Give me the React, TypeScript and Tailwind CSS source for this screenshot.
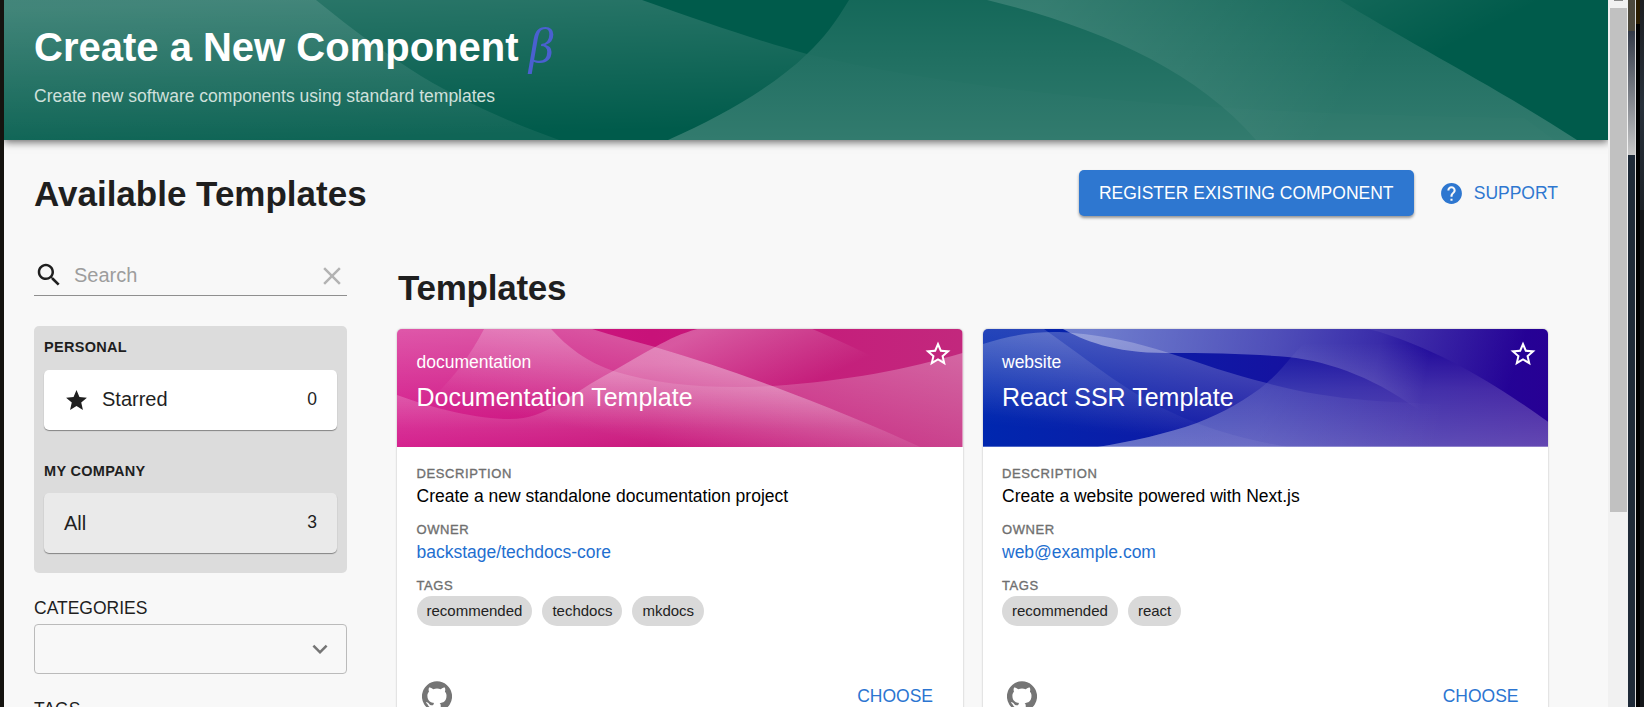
import { ReactNode } from 'react';

function Star({ outline = false, className = '' }: { outline?: boolean; className?: string }) {
  return (
    <svg viewBox="0 0 24 24" fill="currentColor" className={className}>
      {outline ? (
        <path d="M22 9.24l-7.19-.62L12 2 9.19 8.63 2 9.24l5.46 4.73L5.82 21 12 17.27 18.18 21l-1.63-7.03L22 9.24zM12 15.4l-3.76 2.27 1-4.28-3.32-2.88 4.38-.38L12 6.1l1.71 4.04 4.38.38-3.32 2.88 1 4.28L12 15.4z" />
      ) : (
        <path d="M12 17.27L18.18 21l-1.64-7.03L22 9.24l-7.19-.61L12 2 9.19 8.63 2 9.24l5.46 4.73L5.82 21z" />
      )}
    </svg>
  );
}

function GitHub() {
  return (
    <svg viewBox="0 0 24 24" fill="#757575" className="h-[30px] w-[30px] shrink-0">
      <path d="M12 .3a12 12 0 0 0-3.8 23.4c.6.1.8-.3.8-.6v-2c-3.3.7-4-1.6-4-1.6-.6-1.4-1.4-1.8-1.4-1.8-1-.7.1-.7.1-.7 1.2 0 1.9 1.2 1.9 1.2 1 1.8 2.8 1.3 3.5 1 0-.8.4-1.3.7-1.6-2.7-.3-5.5-1.3-5.5-6 0-1.2.5-2.3 1.3-3.1-.2-.4-.6-1.6 0-3.2 0 0 1-.3 3.4 1.2a11.5 11.5 0 0 1 6 0c2.3-1.5 3.3-1.2 3.3-1.2.6 1.6.2 2.8 0 3.2.9.8 1.3 1.9 1.3 3.2 0 4.6-2.8 5.6-5.5 5.9.5.4.9 1 .9 2.2v3.3c0 .3.1.7.8.6A12 12 0 0 0 12 .3" />
    </svg>
  );
}

function HeaderArt() {
  return (
    <svg viewBox="0 0 1604 140" preserveAspectRatio="none" className="absolute inset-0 h-full w-full">
      <defs>
        <linearGradient id="ha" gradientUnits="userSpaceOnUse" x1="300" y1="0" x2="304" y2="140">
          <stop offset="0" stopColor="#fff" stopOpacity=".16" />
          <stop offset="1" stopColor="#fff" stopOpacity="0" />
        </linearGradient>
        <linearGradient id="hl" gradientUnits="userSpaceOnUse" x1="0" y1="0" x2="0" y2="140">
          <stop offset="0" stopColor="#fff" stopOpacity=".12" />
          <stop offset="1" stopColor="#fff" stopOpacity=".06" />
        </linearGradient>
        <linearGradient id="hb" gradientUnits="userSpaceOnUse" x1="0" y1="0" x2="0" y2="140">
          <stop offset="0" stopColor="#fff" stopOpacity=".08" />
          <stop offset="1" stopColor="#fff" stopOpacity=".19" />
        </linearGradient>
        <linearGradient id="hc" gradientUnits="userSpaceOnUse" x1="0" y1="50" x2="14" y2="150">
          <stop offset="0" stopColor="#fff" stopOpacity=".1" />
          <stop offset="1" stopColor="#fff" stopOpacity=".01" />
        </linearGradient>
        <linearGradient id="hd" gradientUnits="userSpaceOnUse" x1="1040" y1="0" x2="1300" y2="160">
          <stop offset="0" stopColor="#fff" stopOpacity=".14" />
          <stop offset="1" stopColor="#fff" stopOpacity=".01" />
        </linearGradient>
        <linearGradient id="he" gradientUnits="userSpaceOnUse" x1="1330" y1="-20" x2="1380" y2="80">
          <stop offset="0" stopColor="#fff" stopOpacity=".09" />
          <stop offset="1" stopColor="#fff" stopOpacity="0" />
        </linearGradient>
      </defs>
      <path d="M0 0H638C700 22 758 42 803 54C770 86 720 115 664 140H0Z" fill="url(#ha)" />
      <path d="M0 0H312C350 31 385 56 417 76C462 103 510 124 555 140H0Z" fill="url(#hl)" />
      <path d="M845 0C831 23 820 38 803 54C770 86 720 115 664 140H1573C1490 86 1400 40 1336 0Z" fill="url(#hb)" />
      <path d="M803 54C770 86 720 115 664 140H1550L1520 118C1300 115 1010 104 803 54Z" fill="url(#hc)" />
      <path d="M983 0C1090 26 1190 68 1252 140H1573C1490 86 1400 40 1336 0Z" fill="url(#hd)" />
      <path d="M1336 0H1604V140H1573C1490 86 1400 40 1336 0Z" fill="url(#he)" />
    </svg>
  );
}

function DocsArt() {
  return (
    <svg viewBox="0 0 565 118" preserveAspectRatio="none" className="absolute inset-0 h-full w-full">
      <defs>
        <linearGradient id="d0" gradientUnits="userSpaceOnUse" x1="0" y1="0" x2="565" y2="0">
          <stop offset="0" stopColor="#d3198a" />
          <stop offset=".45" stopColor="#c81279" />
          <stop offset="1" stopColor="#c2287d" />
        </linearGradient>
        <linearGradient id="d1" gradientUnits="userSpaceOnUse" x1="0" y1="0" x2="0" y2="100">
          <stop offset="0" stopColor="#fff" stopOpacity=".27" />
          <stop offset="1" stopColor="#fff" stopOpacity="0" />
        </linearGradient>
        <linearGradient id="d2" gradientUnits="userSpaceOnUse" x1="0" y1="35" x2="0" y2="118">
          <stop offset="0" stopColor="#fff" stopOpacity=".3" />
          <stop offset="1" stopColor="#fff" stopOpacity=".04" />
        </linearGradient>
        <linearGradient id="d3" gradientUnits="userSpaceOnUse" x1="180" y1="0" x2="160" y2="95">
          <stop offset="0" stopColor="#fff" stopOpacity=".27" />
          <stop offset="1" stopColor="#fff" stopOpacity="0" />
        </linearGradient>
        <linearGradient id="d4" gradientUnits="userSpaceOnUse" x1="310" y1="0" x2="350" y2="85">
          <stop offset="0" stopColor="#fff" stopOpacity=".29" />
          <stop offset="1" stopColor="#fff" stopOpacity="0" />
        </linearGradient>
        <linearGradient id="d5" gradientUnits="userSpaceOnUse" x1="560" y1="24" x2="540" y2="130">
          <stop offset="0" stopColor="#fff" stopOpacity=".29" />
          <stop offset="1" stopColor="#fff" stopOpacity=".1" />
        </linearGradient>
      </defs>
      <rect width="565" height="118" fill="url(#d0)" />
      <path d="M0 0H154C170 18 190 33 216 42C265 57 320 60 375 57C425 76 478 97 523 118H0Z" fill="url(#d1)" />
      <path d="M87 0H195C217 7 237 12 258 18C298 30 338 43 375 57C425 76 478 97 523 118H113L38 66Q66 40 87 0Z" fill="url(#d3)" />
      <path d="M0 66C38 80 80 90 113 90C150 90 170 66 216 42C230 34 243 26 258 18C298 30 338 43 375 57C425 76 478 97 523 118H0Z" fill="url(#d2)" />
      <path d="M258 18C272 10 285 4 300 0H415C450 14 490 37 530 50L523 118C478 97 425 76 375 57C338 43 298 30 258 18Z" fill="url(#d4)" />
      <path d="M375 57C450 52 510 40 565 24V118H523C478 97 425 76 375 57Z" fill="url(#d5)" />
    </svg>
  );
}

function WebsiteArt() {
  return (
    <svg viewBox="0 0 566 118" preserveAspectRatio="none" className="absolute inset-0 h-full w-full">
      <defs>
        <linearGradient id="w0" gradientUnits="userSpaceOnUse" x1="0" y1="0" x2="566" y2="0">
          <stop offset="0" stopColor="#0027af" />
          <stop offset="1" stopColor="#270094" />
        </linearGradient>
        <linearGradient id="w1" gradientUnits="userSpaceOnUse" x1="130" y1="0" x2="118" y2="100">
          <stop offset="0" stopColor="#fff" stopOpacity=".27" />
          <stop offset="1" stopColor="#fff" stopOpacity="0" />
        </linearGradient>
        <linearGradient id="w2" gradientUnits="userSpaceOnUse" x1="60" y1="0" x2="52" y2="100">
          <stop offset="0" stopColor="#fff" stopOpacity=".15" />
          <stop offset="1" stopColor="#fff" stopOpacity="0" />
        </linearGradient>
        <linearGradient id="w3" gradientUnits="userSpaceOnUse" x1="110" y1="0" x2="440" y2="64">
          <stop offset="0" stopColor="#fff" stopOpacity=".42" />
          <stop offset=".55" stopColor="#fff" stopOpacity=".25" />
          <stop offset=".85" stopColor="#fff" stopOpacity=".13" />
          <stop offset="1" stopColor="#fff" stopOpacity="0" />
        </linearGradient>
        <linearGradient id="w4" gradientUnits="userSpaceOnUse" x1="0" y1="14" x2="0" y2="118">
          <stop offset="0" stopColor="#fff" stopOpacity="0" />
          <stop offset=".45" stopColor="#fff" stopOpacity=".16" />
          <stop offset="1" stopColor="#fff" stopOpacity=".28" />
        </linearGradient>
        <linearGradient id="w5" gradientUnits="userSpaceOnUse" x1="340" y1="-10" x2="530" y2="50">
          <stop offset="0" stopColor="#fff" stopOpacity=".26" />
          <stop offset="1" stopColor="#fff" stopOpacity="0" />
        </linearGradient>
        <linearGradient id="w6" gradientUnits="userSpaceOnUse" x1="284" y1="50" x2="460" y2="90">
          <stop offset="0" stopColor="#fff" stopOpacity=".1" />
          <stop offset="1" stopColor="#fff" stopOpacity="0" />
        </linearGradient>
      </defs>
      <rect width="566" height="118" fill="url(#w0)" />
      <path d="M0 0H61C90 20 120 44 152 64C172 76 193 86 214 94C183 105 150 112 115 118H0Z" fill="url(#w2)" />
      <path d="M0 15C40 2 70 2 90 4C125 7 155 14 183 23C218 34 250 46 284 54C265 70 240 84 214 94C183 105 150 112 115 118H0Z" fill="url(#w1)" />
      <path d="M80 0C100 11 130 24 183 24C230 24 270 25 305 28C350 33 395 50 443 86L566 93C525 64 470 26 397 3L385 0Z" fill="url(#w3)" />
      <path d="M328 10C312 20 305 36 284 54C265 70 240 84 214 94C183 105 150 112 115 118H566V93C525 64 470 26 397 3Z" fill="url(#w4)" />
      <path d="M284 54C265 70 240 84 214 94C183 105 150 112 115 118H500V76C410 74 350 72 284 54Z" fill="url(#w6)" />
      <path d="M214 94C183 105 150 112 115 118H305C272 112 243 105 214 94Z" fill="#fff" fillOpacity=".05" />
      <path d="M385 0H566V93C525 64 470 26 397 3Z" fill="url(#w5)" />
      <path d="M0 117.5H566" stroke="#fff" strokeOpacity=".3" />
    </svg>
  );
}

function Field({ label, children }: { label: string; children: ReactNode }) {
  return (
    <div className="h-14">
      <div className="h-[18px] text-[13px] leading-[19px] tracking-[0.6px] text-[#6f6f6f] [-webkit-text-stroke:0.35px]">{label}</div>
      {children}
    </div>
  );
}

type CardProps = {
  art: ReactNode;
  type: string;
  title: string;
  description: string;
  owner: string;
  tags: string[];
};

function TemplateCard({ art, type, title, description, owner, tags }: CardProps) {
  return (
    <article className="h-[420px] grow basis-0 overflow-hidden rounded-[5px] bg-white shadow-[0_0_2px_rgba(0,0,0,0.3)]">
      <div className="relative h-[118px] text-white">
        {art}
        <div className="relative flex h-full flex-col px-[19.5px] pt-[22px]">
          <div className="h-[22px] text-[17.5px] leading-[22px]">{type}</div>
          <div className="mt-2 h-8 text-[25px] leading-8">{title}</div>
        </div>
        <Star outline className="absolute top-[10px] right-[10px] h-[30px] w-[30px]" />
      </div>
      <div className="px-[19.5px] pt-[17px]">
        <Field label="DESCRIPTION">
          <p className="text-[17.5px] leading-7 text-black">{description}</p>
        </Field>
        <Field label="OWNER">
          <p className="text-[17.5px] leading-7 text-[#1f6fd0]">{owner}</p>
        </Field>
        <Field label="TAGS">
          <div className="mt-0.5 flex gap-[10px]">
            {tags.map((t) => (
              <span key={t} className="h-[30px] rounded-full bg-[#d9d9d9] px-[10px] text-[15px] leading-[30px] text-[#222]">
                {t}
              </span>
            ))}
          </div>
        </Field>
        <div className="mt-[49px] flex justify-between pr-[10px] pl-[5px]">
          <GitHub />
          <span className="mt-[1px] text-[17.5px] leading-[28px] text-[#2b75d1]">CHOOSE</span>
        </div>
      </div>
    </article>
  );
}

function Sidebar() {
  return (
    <aside className="w-[313px] shrink-0 text-[#1f1f1f]">
      <div className="flex h-[41px] items-center border-b border-[#8f8f8f]">
        <svg viewBox="0 0 24 24" fill="currentColor" className="h-[30px] w-[30px]">
          <path d="M15.5 14h-.79l-.28-.27C15.41 12.59 16 11.11 16 9.5 16 5.91 13.09 3 9.5 3S3 5.91 3 9.5 5.91 16 9.5 16c1.61 0 3.09-.59 4.23-1.57l.27.28v.79l5 4.99L20.49 19l-4.99-5zm-6 0C7.01 14 5 11.99 5 9.5S7.01 5 9.5 5 14 7.01 14 9.5 11.99 14 9.5 14z" />
        </svg>
        <span className="ml-[10px] grow text-[20px] leading-6 text-[#9d9d9d]">Search</span>
        <svg viewBox="0 0 24 24" fill="#b3b3b3" className="mt-px h-[30px] w-[30px]">
          <path d="M19 6.41L17.59 5 12 10.59 6.41 5 5 6.41 10.59 12 5 17.59 6.41 19 12 13.41 17.59 19 19 17.59 13.41 12z" />
        </svg>
      </div>
      <section className="mt-[30px] h-[247px] rounded-[5px] bg-[#dcdcdc] px-[10px]">
        <h3 className="h-11 pt-[9px] text-[14.5px] leading-[25px] font-bold tracking-[0.3px]">PERSONAL</h3>
        <div className="flex h-[60px] items-center rounded-[5px] bg-white px-5 shadow-[0_1px_1px_rgba(0,0,0,0.4)]">
          <Star className="h-[25px] w-[25px]" />
          <span className="ml-[13px] grow pb-[2px] text-[20px]">Starred</span>
          <span className="pb-[2px] text-[17.5px]">0</span>
        </div>
        <h3 className="mt-5 h-[43px] pt-[9px] text-[14.5px] leading-[25px] font-bold tracking-[0.3px]">MY COMPANY</h3>
        <div className="flex h-[60px] items-center rounded-[5px] bg-[#eaeaea] px-5 shadow-[0_1px_1px_rgba(0,0,0,0.4)]">
          <span className="grow text-[20px]">All</span>
          <span className="pb-[2px] text-[17.5px]">3</span>
        </div>
      </section>
      <div className="mt-[22px] h-[29px] text-[17.5px] leading-[26px]">CATEGORIES</div>
      <div className="flex h-[50px] items-center justify-end rounded-[4px] border border-[#bbb] pr-[11px]">
        <svg viewBox="0 0 24 24" fill="#757575" className="h-[30px] w-[30px]">
          <path d="M7.41 8.59L12 13.17l4.59-4.58L18 10l-6 6-6-6z" />
        </svg>
      </div>
      <div className="mt-[22px] text-[17.5px] leading-[26px]">TAGS</div>
    </aside>
  );
}

export default function App() {
  return (
    <div className="flex h-[707px] w-[1644px] overflow-hidden bg-[#15130f] font-['Liberation_Sans',Arial,sans-serif]">
      <div className="w-1 shrink-0" />
      <div className="flex w-[1604px] shrink-0 flex-col overflow-hidden bg-[#f8f8f8]">
        <header className="relative z-10 h-[140px] shrink-0 bg-[#005b4b] shadow-[0_2px_8px_rgba(0,0,0,0.6)]">
          <HeaderArt />
          <div className="relative px-[30px] pt-[22px]">
            <h1 className="flex h-[50px] items-center text-[40px] leading-[50px] font-bold whitespace-nowrap text-white">
              Create a New Component
              <span className="ml-[10px] pb-[3px] font-['Liberation_Serif',serif] text-[50px] font-normal text-[#4a60d0] italic">β</span>
            </h1>
            <p className="mt-[12px] text-[17.5px] leading-6 text-[#cfe0dc]">Create new software components using standard templates</p>
          </div>
        </header>
        <div className="mt-[30px] flex h-[46px] shrink-0 items-center pr-[50px] pl-[30px] text-[17.5px]">
          <h2 className="grow pt-[2px] text-[35px] font-bold text-[#1f1f1f]">Available Templates</h2>
          <div className="flex h-[46px] w-[335px] items-center justify-center rounded-[5px] bg-[#2e77d0] text-white shadow-[0_2px_3px_rgba(0,0,0,0.4)]">
            REGISTER EXISTING COMPONENT
          </div>
          <div className="ml-[25px] flex items-center text-[#2e77d0]">
            <svg viewBox="0 0 24 24" fill="currentColor" className="h-[25px] w-[25px]">
              <path d="M12 2C6.48 2 2 6.48 2 12s4.48 10 10 10 10-4.48 10-10S17.52 2 12 2zm1 17h-2v-2h2v2zm2.07-7.75l-.9.92C13.45 12.9 13 13.5 13 15h-2v-.5c0-1.1.45-2.1 1.17-2.83l1.24-1.26c.37-.36.59-.86.59-1.41 0-1.1-.9-2-2-2s-2 .9-2 2H8c0-2.21 1.79-4 4-4s4 1.79 4 4c0 .88-.36 1.68-.93 2.25z" />
            </svg>
            <span className="ml-[10px]">SUPPORT</span>
          </div>
        </div>
        <div className="flex grow pl-[30px]">
          <div className="pt-[39px]">
            <Sidebar />
          </div>
          <main className="ml-[50px] pt-[52px]">
            <h2 className="h-[61px] pl-px text-[35px] leading-10 font-bold tracking-[-0.25px] text-[#1f1f1f]">Templates</h2>
            <div className="flex w-[1151px] gap-5">
              <TemplateCard
                art={<DocsArt />}
                type="documentation"
                title="Documentation Template"
                description="Create a new standalone documentation project"
                owner="backstage/techdocs-core"
                tags={['recommended', 'techdocs', 'mkdocs']}
              />
              <TemplateCard
                art={<WebsiteArt />}
                type="website"
                title="React SSR Template"
                description="Create a website powered with Next.js"
                owner="web@example.com"
                tags={['recommended', 'react']}
              />
            </div>
          </main>
        </div>
      </div>
      <div className="flex w-5 shrink-0 flex-col items-center bg-[#f1f1f1]">
        <div className="h-[1px] w-[9px] bg-[#8a8a8a]" />
        <div className="mt-[7px] h-[504px] w-[17px] bg-[#c1c1c1]" />
      </div>
      <div className="flex w-[7px] shrink-0 flex-col bg-[#1e2a38]">
        <div className="h-[31px] bg-[#4c483c]" />
        <div className="h-[124px] bg-gradient-to-b from-[#333a48] to-[#c8c8c8]" />
      </div>
      <div className="w-px shrink-0 bg-[#d8d8d8]" />
      <div className="w-1 shrink-0 bg-black">
        <div className="h-6 bg-[#2a1c00]" />
      </div>
      <div className="grow bg-[#141619]">
        <div className="h-[210px] bg-gradient-to-b from-[#1c1e22] via-[#27303a] to-[#1c2127]" />
      </div>
    </div>
  );
}
